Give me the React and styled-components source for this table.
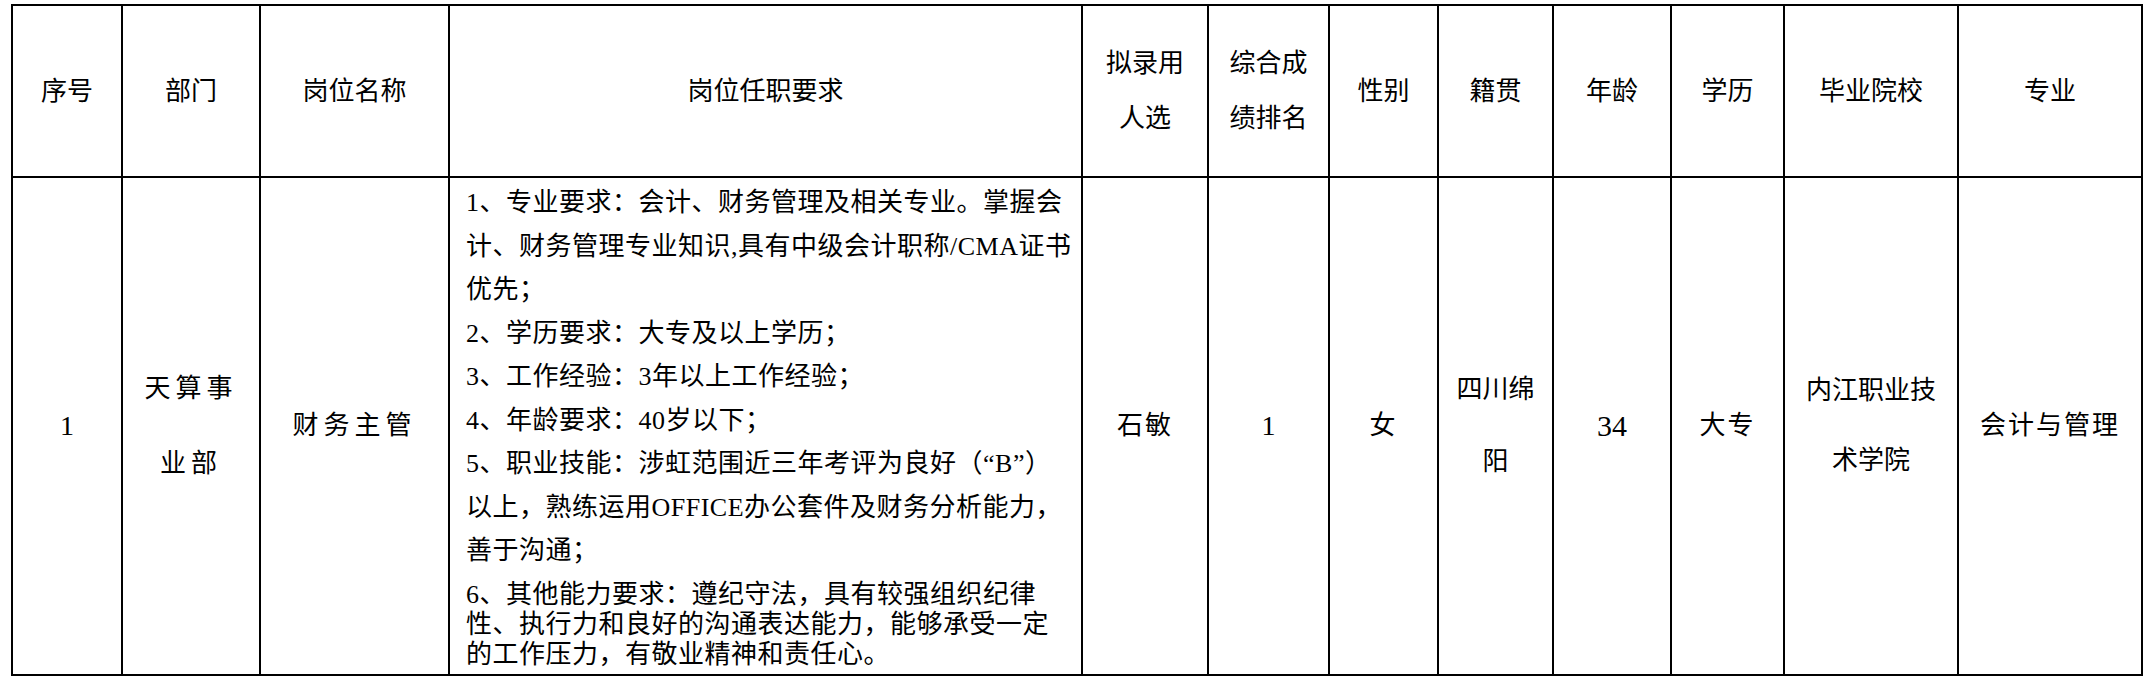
import React from "react";
import styled, { createGlobalStyle } from "styled-components";

const GlobalStyle = createGlobalStyle`
  html, body {
    margin: 0;
    padding: 0;
    background: #ffffff;
  }
  body {
    font-family: "Liberation Serif", "Noto Sans CJK SC", serif;
    color: #000000;
  }
`;

const Page = styled.div`
  padding: 4px 0 0 11px;
`;

const Table = styled.table`
  border-collapse: collapse;
  table-layout: fixed;
  width: 2132px;
  font-family: "Liberation Serif", "Noto Sans CJK SC", serif;
  font-weight: 400;
  color: #000;
`;

const HeadRow = styled.tr`
  height: 172px;
`;

const BodyRow = styled.tr`
  height: 498px;
`;

const HeadCell = styled.th`
  border: 2px solid #000;
  padding: 0;
  font-size: 26px;
  font-weight: 400;
  line-height: 55px;
  text-align: center;
  vertical-align: middle;
  white-space: nowrap;
`;

const Cell = styled.td`
  border: 2px solid #000;
  padding: 0;
  font-size: ${(p) => p.$size || 26}px;
  line-height: ${(p) => p.$lh || 40}px;
  letter-spacing: ${(p) => p.$spacing || 0}px;
  text-align: center;
  vertical-align: middle;
  white-space: nowrap;
`;

const RequireCell = styled.td`
  border: 2px solid #000;
  padding: 3px 4px 0 16px;
  vertical-align: top;
  text-align: left;
  font-size: 26px;
  letter-spacing: 0.5px;
  white-space: nowrap;
`;

const Para = styled.div`
  line-height: ${(p) => p.$lh}px;
  margin-top: ${(p) => p.$gap || 0}px;
`;

const Line = styled.span`
  display: block;
`;

const columns = [110, 138, 189, 633, 126, 121, 109, 115, 118, 113, 174, 184];

const paraMain = [
  "1、专业要求：会计、财务管理及相关专业。掌握会",
  "计、财务管理专业知识,具有中级会计职称/CMA证书",
  "优先；",
  "2、学历要求：大专及以上学历；",
  "3、工作经验：3年以上工作经验；",
  "4、年龄要求：40岁以下；",
  "5、职业技能：涉虹范围近三年考评为良好（“B”）",
  "以上，熟练运用OFFICE办公套件及财务分析能力，",
  "善于沟通；",
];

const paraOther = [
  "6、其他能力要求：遵纪守法，具有较强组织纪律",
  "性、执行力和良好的沟通表达能力，能够承受一定",
  "的工作压力，有敬业精神和责任心。",
];

const Lines = ({ items }) =>
  items.map((t, i) => <Line key={i}>{t}</Line>);

export default function App() {
  return (
    <Page>
      <GlobalStyle />
      <Table>
        <colgroup>
          {columns.map((w, i) => (
            <col key={i} style={{ width: w }} />
          ))}
        </colgroup>
        <thead>
          <HeadRow>
            <HeadCell>序号</HeadCell>
            <HeadCell>部门</HeadCell>
            <HeadCell>岗位名称</HeadCell>
            <HeadCell>岗位任职要求</HeadCell>
            <HeadCell>
              拟录用
              <br />
              人选
            </HeadCell>
            <HeadCell>
              综合成
              <br />
              绩排名
            </HeadCell>
            <HeadCell>性别</HeadCell>
            <HeadCell>籍贯</HeadCell>
            <HeadCell>年龄</HeadCell>
            <HeadCell>学历</HeadCell>
            <HeadCell>毕业院校</HeadCell>
            <HeadCell>专业</HeadCell>
          </HeadRow>
        </thead>
        <tbody>
          <BodyRow>
            <Cell $size={28}>1</Cell>
            <Cell $spacing={5} $lh={75}>
              天算事
              <br />
              业部
            </Cell>
            <Cell $spacing={5}>财务主管</Cell>
            <RequireCell>
              <Para $lh={43.5}>
                <Lines items={paraMain} />
              </Para>
              <Para $lh={30} $gap={7}>
                <Lines items={paraOther} />
              </Para>
            </RequireCell>
            <Cell $spacing={2}>石敏</Cell>
            <Cell $size={28}>1</Cell>
            <Cell $spacing={2}>女</Cell>
            <Cell $lh={72}>
              四川绵
              <br />
              阳
            </Cell>
            <Cell $size={30}>34</Cell>
            <Cell $spacing={2}>大专</Cell>
            <Cell $lh={70}>
              内江职业技
              <br />
              术学院
            </Cell>
            <Cell $spacing={2}>会计与管理</Cell>
          </BodyRow>
        </tbody>
      </Table>
    </Page>
  );
}
